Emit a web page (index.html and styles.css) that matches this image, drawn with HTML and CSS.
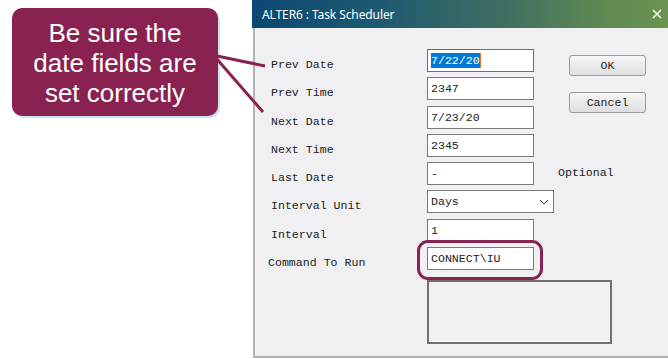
FILE: index.html
```html
<!DOCTYPE html>
<html lang="en">
<head>
  <meta charset="UTF-8" />
  <title>ALTER6 : Task Scheduler</title>
  <link rel="stylesheet" href="styles.css">
</head>
<body>

  <div class="side">
    <div class="callout">Be sure the<br>date fields are<br>set correctly</div>
  </div>

  <div class="dialog">
    <div class="titlebar">
      <span class="title">ALTER6 : Task Scheduler</span>
      <svg class="close" width="10" height="10" viewBox="0 0 10 10">
        <path d="M1 1 L9 9 M9 1 L1 9" stroke="#fff" stroke-width="1.4" />
      </svg>
    </div>

    <div class="panel">
      <div class="form">
        <label class="lbl">Prev Date</label>
        <div class="field focused"><span class="sel">7/22/20</span><span class="caret"></span></div>
        <div class="buttons">
          <button class="btn">OK</button>
          <button class="btn">Cancel</button>
        </div>

        <label class="lbl">Prev Time</label>
        <div class="field">2347</div>

        <label class="lbl">Next Date</label>
        <div class="field">7/23/20</div>

        <label class="lbl">Next Time</label>
        <div class="field">2345</div>

        <label class="lbl">Last Date</label>
        <div class="field">-</div>
        <span class="optional">Optional</span>

        <label class="lbl">Interval Unit</label>
        <div class="field combo">
          <span>Days</span>
          <svg width="10" height="6" viewBox="0 0 10 6">
            <path d="M1 1 L5 5 L9 1" fill="none" stroke="#444" stroke-width="1" />
          </svg>
        </div>

        <label class="lbl">Interval</label>
        <div class="field">1</div>

        <label class="lbl cmd">Command To Run</label>
        <div class="field marked">CONNECT\IU<span class="ring"></span></div>

        <div class="memo"></div>
      </div>
    </div>
  </div>

  <svg class="pointers" width="668" height="359">
    <line x1="217" y1="56" x2="265" y2="66" />
    <line x1="216" y1="58" x2="263" y2="112" />
  </svg>

</body>
</html>
```

FILE: styles.css
```css
body {
  margin: 0;
  width: 668px;
  height: 359px;
  display: flex;
  background: #fff;
  overflow: hidden;
  position: relative;
}

.side {
  width: 252px;
  flex: none;
  padding: 8px 0 0 12px;
  box-sizing: border-box;
}

.callout {
  width: 206px;
  height: 108px;
  box-sizing: border-box;
  padding: 2px 6px 0;
  background: #8a2251;
  color: #fff;
  border-radius: 10px;
  box-shadow: 2px 2px 0 #c9e4f8;
  font-family: "Liberation Sans", Arial, sans-serif;
  font-size: 26px;
  line-height: 30px;
  text-align: center;
  display: flex;
  align-items: center;
  justify-content: center;
}

.dialog {
  flex: 1;
  display: flex;
  flex-direction: column;
  height: 359px;
}

.titlebar {
  height: 28px;
  flex: none;
  display: flex;
  align-items: center;
  justify-content: space-between;
  padding: 0 6px 0 10px;
  background: linear-gradient(to right, #0b4872 0%, #1d5a70 30%, #3f6e62 60%, #5f8a52 85%, #6b9350 100%);
}

.title {
  color: #fff;
  font-family: "Noto Sans", "Open Sans", sans-serif;
  font-size: 12px;
  letter-spacing: -0.1px;
}

.panel {
  flex: 1;
  margin-left: 1px;
  margin-bottom: 1px;
  background: #f0f0f2;
  border-left: 2px solid #b3b3b3;
  border-bottom: 2px solid #b3b3b3;
  padding: 21px 0 0 16px;
}

.form {
  display: grid;
  grid-template-columns: 156px 107px auto;
  grid-auto-rows: 23px;
  row-gap: 5.3px;
  font-family: "Liberation Mono", "Courier New", monospace;
  font-size: 11.6px;
  color: #222;
}

.lbl {
  grid-column: 1;
  align-self: end;
  line-height: 14px;
  padding-bottom: 0;
}

.lbl.cmd {
  margin-left: -3px;
}

.field {
  grid-column: 2;
  position: relative;
  box-sizing: border-box;
  height: 23px;
  background: #fff;
  border: 1px solid #7a7a7a;
  padding: 0 3px;
  display: flex;
  align-items: center;
  white-space: nowrap;
}

.field.focused {
  border-color: #4d78a6;
}

.sel {
  background: #0078d7;
  color: #fff;
  line-height: 15px;
}

.caret {
  width: 1px;
  height: 15px;
  background: #d77a30;
}

.combo {
  width: 127px;
  justify-content: space-between;
  padding-right: 4px;
}

.ring {
  position: absolute;
  left: -11px;
  top: -8px;
  right: -10px;
  bottom: -11px;
  border: 3px solid #8a2251;
  border-radius: 11px;
}

.buttons {
  grid-column: 3;
  grid-row: 1 / span 3;
  display: flex;
  flex-direction: column;
  gap: 16px;
  padding: 6px 0 0 35px;
}

.btn {
  width: 77px;
  height: 21px;
  padding: 0;
  font-family: "Liberation Mono", "Courier New", monospace;
  font-size: 11.6px;
  color: #222;
  background: linear-gradient(#f6f6f6, #dedfe2);
  border: 1px solid #9c9c9c;
  border-radius: 3px;
}

.optional {
  grid-column: 3;
  align-self: center;
  padding-left: 24px;
  margin-top: -2px;
}

.memo {
  grid-column: 2 / span 2;
  width: 185px;
  height: 64px;
  margin-top: 5px;
  box-sizing: border-box;
  background: #f0f0f0;
  border: 2px solid #707070;
  box-shadow: inset -1px -1px 0 #fff;
}

.pointers {
  position: absolute;
  left: 0;
  top: 0;
  pointer-events: none;
}

.pointers line {
  stroke: #8a2251;
  stroke-width: 3;
}
```
